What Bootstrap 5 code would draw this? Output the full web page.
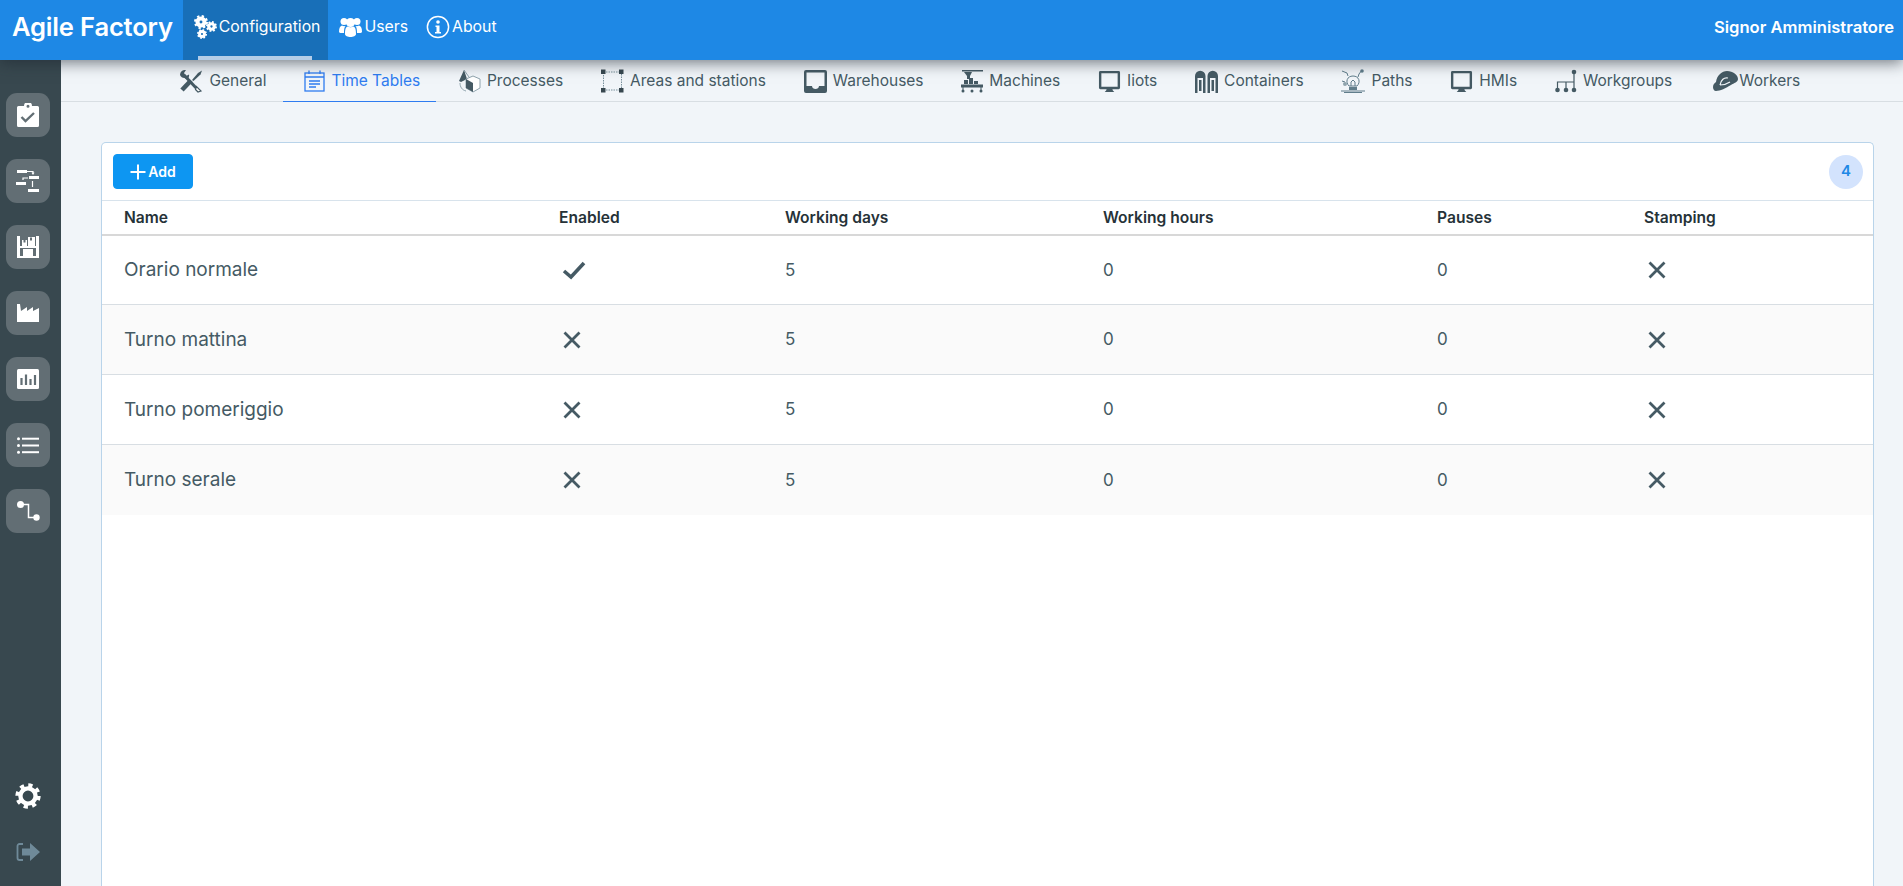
<!DOCTYPE html>
<html lang="en">
<head>
  <meta charset="UTF-8">
  <meta name="viewport" content="width=device-width, initial-scale=1.0">
  <title>Agile Factory</title>
  <link href="https://cdn.jsdelivr.net/npm/bootstrap@5.3.0/dist/css/bootstrap.min.css" rel="stylesheet">
  <style>
    html, body { height: 100%; overflow: hidden; }
    body { font-family: Inter, "Liberation Sans", sans-serif; background: #f1f5f9; color: #455a64; }
    svg { display: block; flex: none; }

    /* top bar */
    .top-bar { height: 60px; background: #1e88e5; color: #fff; position: relative; z-index: 2; box-shadow: 0 3px 14px rgba(30, 40, 50, .6); }
    .top-brand { font-size: 25.6px; font-weight: 600; letter-spacing: -.2px; padding: 0 10px 6px 12px; color: #fff; margin: 0; }
    .top-link { height: 60px; padding: 0 7px 6px 11px; color: #fff; font-size: 15.8px; gap: 2px; position: relative; }
    .top-link:hover { color: #fff; }
    .top-link.is-on { background: #186fb8; padding-right: 8px; }
    .top-link.is-on::after { content: ""; position: absolute; left: 15px; right: 16px; bottom: 0; height: 4px; background: #b3cde8; }
    .top-user { font-size: 16.6px; font-weight: 600; padding: 0 9px 6px 0; }

    /* left rail */
    .side-rail { width: 61px; background: #38484f; padding: 33px 11px 0 6px; }
    .rail-btn { width: 44px; height: 44px; border-radius: 11px; background: #626e74; margin-bottom: 22px; }
    .rail-foot { margin-top: auto; width: 44px; padding-bottom: 24px; }
    .rail-gear { margin-bottom: 33px; }

    /* tabs */
    .tab-bar { height: 42px; border-bottom: 1px solid #d8dee3; padding-right: 6px; }
    .tab-item { height: 42px; padding: 1px 16px 0 21.8px; gap: 6px; font-size: 15.5px; color: #455a64; border-bottom: 1px solid transparent; }
    .tab-item:hover { color: #455a64; }
    .tab-item.is-on { color: #2f7cf0; border-bottom-color: #2f7cf0; }
    .tab-last { padding-left: 24px; padding-right: 0; gap: 0; }

    /* card with table */
    .page-body { padding: 40px 29px 0 40px; min-height: 0; }
    .data-card { border: 1px solid #b9d4ea; border-bottom: 0; border-radius: 5px 5px 0 0; background: #fff; }
    .card-tools { height: 57px; padding: 0 10px 0 11px; }
    .add-btn { width: 80px; height: 35px; background: #0d96f2; border-color: #0d96f2; border-radius: 4px; font-size: 14px; font-weight: 600; padding: 0; gap: 2px; }
    .add-btn:hover { background: #0d96f2; border-color: #0d96f2; }
    .count-dot { width: 34px; height: 34px; background: #d3e3fd; color: #1e88e5; font-size: 15px; font-weight: 600; }
    .time-table { table-layout: fixed; margin: 0; --bs-table-bg: transparent; }
    .time-table th { height: 34px; padding: 1px 22px 0; font-size: 15.6px; font-weight: 600; color: #263238; vertical-align: middle; border-top: 1px solid #d8e3ec; border-bottom: 2px solid #d8d8d8; }
    .time-table td { height: 70px; padding: 1px 22px 0; font-size: 19px; color: #455a64; vertical-align: middle; border-bottom: 1px solid #d8dee3; }
    .time-table td svg { margin-left: 3px; }
    .time-table tbody tr:nth-child(even) td { background: #fafafa; }
    .time-table tbody tr:last-child td { border-bottom: 0; }
    .time-table .cell-num { font-size: 17px; }
    .col-a { width: 435px; }
    .col-b { width: 226px; }
    .col-c { width: 318px; }
    .col-d { width: 334px; }
    .col-e { width: 207px; }
  </style>
</head>
<body class="d-flex flex-column">

  <svg width="0" height="0" class="position-absolute">
    <defs>
      <symbol id="i-gear" viewBox="0 0 24 24">
        <circle cx="12" cy="12" r="7" fill="none" stroke="currentColor" stroke-width="4"/>
        <circle cx="12" cy="12" r="10" fill="none" stroke="currentColor" stroke-width="3.4" stroke-dasharray="3.9 3.95"/>
      </symbol>
      <symbol id="i-gear-solid" viewBox="0 0 24 24">
        <circle cx="12" cy="12" r="6" fill="none" stroke="currentColor" stroke-width="7"/>
        <circle cx="12" cy="12" r="10" fill="none" stroke="currentColor" stroke-width="4" stroke-dasharray="3.9 3.95"/>
      </symbol>
      <symbol id="i-monitor" viewBox="0 0 24 24">
        <path fill="currentColor" fill-rule="evenodd" d="M2.500 1h19A1.500 1.500 0 0 1 23 2.500v16a1.500 1.500 0 0 1-1.500 1.500H15l.5 1.500 1.500 1.500H7l1.500-1.500.5-1.500H2.500A1.500 1.500 0 0 1 1 18.500v-16A1.500 1.500 0 0 1 2.500 1zM3.500 3.500v14h17v-14z"/>
      </symbol>
      <symbol id="i-cross" viewBox="0 0 20 20">
        <path d="M2.500 2.500l15 15M17.500 2.500l-15 15" fill="none" stroke="currentColor" stroke-width="2.800"/>
      </symbol>
    </defs>
  </svg>

  <!-- Barra superiore -->
  <nav class="top-bar d-flex align-items-center flex-none">
    <h1 class="top-brand">Agile Factory</h1>
    <a href="#" class="top-link is-on d-flex align-items-center text-decoration-none">
      <svg width="23" height="24" viewBox="0 0 23 24" color="#fff">
        <use href="#i-gear-solid" x="0" y="0" width="14" height="14"/>
        <use href="#i-gear-solid" x="12" y="6" width="11" height="11"/>
        <use href="#i-gear-solid" x="3" y="14" width="10" height="10"/>
      </svg>
      Configuration
    </a>
    <a href="#" class="top-link d-flex align-items-center text-decoration-none">
      <svg width="23" height="20" viewBox="0 0 23 20">
        <g fill="#fff">
          <circle cx="5" cy="4.500" r="3.500"/><circle cx="18" cy="4.500" r="3.500"/><circle cx="11.500" cy="5.500" r="4.500"/>
          <path d="M0 15c0-4 1-6 3-6.500 1 .8 2.400.8 3.500.6C5.300 10.500 5 13 5 16 2 16 0 16 0 15zM23 15c0-4-1-6-3-6.500-1 .8-2.400.8-3.500.6 1.200 1.400 1.500 3.900 1.500 6.900 3 0 5 0 5-1zM6 17c0-5 1-7 2.500-7.500 1.500 1 4.500 1 6 0C16 10 17 12 17 17c0 4-11 4-11 0z"/>
        </g>
      </svg>
      Users
    </a>
    <a href="#" class="top-link d-flex align-items-center text-decoration-none">
      <svg width="24" height="24" viewBox="0 0 24 24">
        <circle cx="12" cy="12" r="10.600" fill="none" stroke="#fff" stroke-width="1.500"/>
        <circle cx="12" cy="7" r="1.800" fill="#fff"/>
        <path d="M9.500 10.500h4v6.500h1.500v1.500H9v-1.500h1.500v-5h-1z" fill="#fff"/>
      </svg>
      About
    </a>
    <div class="top-user ms-auto">Signor Amministratore</div>
  </nav>

  <div class="d-flex flex-grow-1" style="min-height:0">
    <!-- Colonna laterale -->
    <aside class="side-rail d-flex flex-column flex-none">
      <a href="#" class="rail-btn d-flex align-items-center justify-content-center">
        <svg width="22" height="24" viewBox="0 0 22 24">
          <path fill="#fff" fill-rule="evenodd" d="M1.500 3H7a4 4 0 0 1 8 0h5.500A1.500 1.500 0 0 1 22 4.500v18a1.500 1.500 0 0 1-1.500 1.500h-19A1.500 1.500 0 0 1 0 22.500v-18A1.500 1.500 0 0 1 1.500 3zM11 1.700a1.500 1.500 0 1 0 0 3 1.500 1.500 0 0 0 0-3z"/>
          <path d="M4.500 14l4 4 8.500-8" fill="none" stroke="#626e74" stroke-width="2.400"/>
        </svg>
      </a>
      <a href="#" class="rail-btn d-flex align-items-center justify-content-center">
        <svg width="24" height="22" viewBox="0 0 24 22">
          <g fill="#fff">
            <rect x="1" y="0" width="10" height="3"/><rect x="13" y="6" width="10" height="3"/>
            <rect x="0" y="12" width="10" height="3"/><rect x="12" y="19" width="11" height="3"/>
          </g>
          <path d="M11 1.500h6l0 2M16 2.500l1 1.500 1-1.500M12 8H7v2M16.500 11v6" fill="none" stroke="#fff" stroke-width="1.200"/>
        </svg>
      </a>
      <a href="#" class="rail-btn d-flex align-items-center justify-content-center">
        <svg width="22" height="22" viewBox="0 0 22 22">
          <path fill="#fff" fill-rule="evenodd" d="M0 0h3v10h2V4h5v6h1V1h7v9h1V0h3v22H0zM3 12v8h3v-7h10v7h3v-8z"/>
          <path fill="#fff" d="M7 13.500h3v3h2v-3h3V20H7z"/>
          <path d="M13 1.500v3h2v-3zM6.500 4v2.500h2V4z" fill="#626e74"/>
        </svg>
      </a>
      <a href="#" class="rail-btn d-flex align-items-center justify-content-center">
        <svg width="22" height="18" viewBox="0 0 22 18">
          <path fill="#fff" d="M0 0h3l1 7 6-4v4l6-4v4l6-3v14H0z"/>
        </svg>
      </a>
      <a href="#" class="rail-btn d-flex align-items-center justify-content-center">
        <svg width="22" height="20" viewBox="0 0 22 20">
          <rect width="22" height="20" rx="1.500" fill="#fff"/>
          <path d="M4.500 16V9M9 16V5.500M13.500 16V10M18 16V6" stroke="#626e74" stroke-width="2.200" fill="none"/>
        </svg>
      </a>
      <a href="#" class="rail-btn d-flex align-items-center justify-content-center">
        <svg width="22" height="17" viewBox="0 0 22 17">
          <g fill="#fff">
            <circle cx="1.500" cy="1.800" r="1.500"/><circle cx="1.500" cy="8.500" r="1.500"/><circle cx="1.500" cy="15.200" r="1.500"/>
            <rect x="5" y="0.700" width="17" height="2"/><rect x="5" y="7.500" width="17" height="2"/><rect x="5" y="14.200" width="17" height="2"/>
          </g>
        </svg>
      </a>
      <a href="#" class="rail-btn d-flex align-items-center justify-content-center">
        <svg width="23" height="20" viewBox="0 0 23 20">
          <circle cx="3.500" cy="3.500" r="3.500" fill="#fff"/><circle cx="19.500" cy="16.500" r="3.200" fill="#fff"/>
          <path d="M4 3.500h7.500v13H19" fill="none" stroke="#fff" stroke-width="1.500"/>
        </svg>
      </a>
      <div class="rail-foot d-flex flex-column align-items-center">
        <svg width="26" height="26" viewBox="0 0 24 24" color="#fff" class="rail-gear"><use href="#i-gear"/></svg>
        <svg width="24" height="20" viewBox="0 0 24 20">
          <path d="M7 2H3.500A2 2 0 0 0 1.500 4v12a2 2 0 0 0 2 2H7" fill="none" stroke="#6f8a99" stroke-width="1.800"/>
          <path d="M6 6.500h8V1l10 9-10 9v-5.500H6z" fill="#6f8a99"/>
        </svg>
      </div>
    </aside>

    <main class="flex-grow-1 d-flex flex-column" style="min-width:0">
      <!-- Schede -->
      <div class="tab-bar d-flex justify-content-center">
        <a href="#" class="tab-item d-flex align-items-center text-decoration-none">
          <svg width="24" height="24" viewBox="0 0 24 24">
            <path d="M5 6l14 15" stroke="#455a64" stroke-width="3" fill="none"/>
            <path d="M22 22l-3 1-2.500-2.500 1-3z" fill="#fff" stroke="#455a64" stroke-width="1.200"/>
            <path d="M1 6a5 5 0 0 1 6-5L5 4l2 3 3-1.500A5 5 0 0 1 8 10.500L5.500 9A5 5 0 0 1 1 6z" fill="#455a64"/>
            <path d="M3 21l9-9.500" stroke="#455a64" stroke-width="4.600" fill="none"/>
            <path d="M13 11l6-7 4-2.500-1.500 4-7 6.500z" fill="#455a64"/>
          </svg>
          General
        </a>
        <a href="#" class="tab-item is-on d-flex align-items-center text-decoration-none">
          <svg width="21" height="22" viewBox="0 0 21 22">
            <g fill="none" stroke="#2f7cf0" stroke-width="1.300">
              <rect x="1" y="3" width="19" height="18"/>
              <path d="M1 7h19M5 0.500V4M16 0.500V4M5 11h11M5 14h11M5 17h7"/>
            </g>
          </svg>
          Time Tables
        </a>
        <a href="#" class="tab-item d-flex align-items-center text-decoration-none">
          <svg width="23" height="24" viewBox="0 0 23 24">
            <path d="M6 1L1 12l2 1 6-3z" fill="#455a64"/>
            <path d="M6 1l5 7M2 14c0 4 2 7 6 8" fill="none" stroke="#90a4ae"/>
            <path d="M8 10l7-3 7 3v9l-7 4-7-4z" fill="#fff" stroke="#90a4ae"/>
            <path d="M8 10l7 4v9l-7-4z" fill="#455a64"/>
          </svg>
          Processes
        </a>
        <a href="#" class="tab-item d-flex align-items-center text-decoration-none">
          <svg width="23" height="24" viewBox="0 0 23 24">
            <rect x="2.500" y="3" width="18" height="18" fill="none" stroke="#78909c" stroke-dasharray="1.500 1"/>
            <g fill="#37474f">
              <rect x="0" y="0.500" width="4.500" height="4.500"/><rect x="18" y="0.500" width="4.500" height="4.500"/>
              <rect x="0" y="19" width="4.500" height="4.500"/><rect x="18" y="19" width="4.500" height="4.500"/>
            </g>
          </svg>
          Areas and stations
        </a>
        <a href="#" class="tab-item d-flex align-items-center text-decoration-none">
          <svg width="23" height="23" viewBox="0 0 23 23">
            <path fill="#455a64" fill-rule="evenodd" d="M2 0h19a2 2 0 0 1 2 2v19a2 2 0 0 1-2 2H2a2 2 0 0 1-2-2V2a2 2 0 0 1 2-2zM2.500 2.500V16H8c0 4 7 4 7 0h5.500V2.500z"/>
          </svg>
          Warehouses
        </a>
        <a href="#" class="tab-item d-flex align-items-center text-decoration-none">
          <svg width="22" height="24" viewBox="0 0 22 24">
            <g fill="#455a64">
              <rect x="1" y="1" width="21" height="1.500"/>
              <path d="M3 3h8L9 7v3H6V7z"/>
              <rect x="3" y="11" width="4" height="4"/><rect x="8" y="9" width="4" height="6"/><rect x="13" y="12" width="4" height="3"/>
              <rect x="0" y="15.500" width="22" height="3"/>
              <circle cx="2" cy="22" r="1.500"/><circle cx="11" cy="22" r="1.500"/><circle cx="20" cy="22" r="1.500"/>
              <rect x="1.500" y="18" width="1" height="4"/><rect x="19.500" y="18" width="1" height="4"/>
            </g>
          </svg>
          Machines
        </a>
        <a href="#" class="tab-item d-flex align-items-center text-decoration-none">
          <svg width="23" height="23" viewBox="0 0 24 24" color="#455a64"><use href="#i-monitor"/></svg>
          Iiots
        </a>
        <a href="#" class="tab-item d-flex align-items-center text-decoration-none">
          <svg width="23" height="23" viewBox="0 0 23 23">
            <path fill="#455a64" fill-rule="evenodd" d="M0 6a5 5 0 0 1 10.500 0v17H8V8H2.500v15H0zM12.500 6A5 5 0 0 1 23 6v17h-2.500V8H15v15h-2.500z"/>
            <path fill="#455a64" d="M4 10h2.500v11H4zM16.500 10H19v11h-2.500z"/>
          </svg>
          Containers
        </a>
        <a href="#" class="tab-item d-flex align-items-center text-decoration-none">
          <svg width="24" height="24" viewBox="0 0 24 24">
            <g fill="none" stroke="#607d8b">
              <path d="M8 17c-4-4-2-10 4-10s8 6 4 10z"/>
              <path d="M10 17v-4l2-2 2 2v4M0 22h24M3 23.500h18" />
              <path d="M1 2l5 2 1 3M21 1l-3 4-1 3M1 12l3 1"/>
            </g>
            <circle cx="4" cy="15" r="2" fill="#90a4ae"/><circle cx="21" cy="2" r="1.800" fill="#607d8b"/>
            <rect x="8" y="18" width="8" height="3" fill="#607d8b"/>
          </svg>
          Paths
        </a>
        <a href="#" class="tab-item d-flex align-items-center text-decoration-none">
          <svg width="23" height="23" viewBox="0 0 24 24" color="#455a64"><use href="#i-monitor"/></svg>
          HMIs
        </a>
        <a href="#" class="tab-item d-flex align-items-center text-decoration-none">
          <svg width="22" height="24" viewBox="0 0 22 24">
            <g fill="#455a64">
              <circle cx="19" cy="3" r="2.300"/><circle cx="2.500" cy="21" r="2.300"/><circle cx="11" cy="21" r="2.300"/><circle cx="19" cy="21" r="2.300"/>
            </g>
            <path d="M19 3v18M2.500 21v-8H19M11 21v-8" fill="none" stroke="#455a64" stroke-width="1.200"/>
          </svg>
          Workgroups
        </a>
        <a href="#" class="tab-item tab-last d-flex align-items-center text-decoration-none">
          <svg width="27" height="24" viewBox="0 0 27 24">
            <path fill="#455a64" d="M1 18c0-3 2-4 3-5C5 6 10 2 15 2c6 0 11 4 11 8 0 3-4 4-7 6-5 3-11 6-15 6-2 0-3-2-3-4z"/>
            <path d="M8 16c1-5 4-8 8-7M8 16c3 0 7-1 10-3" fill="none" stroke="#f1f5f9" stroke-width="1.200"/>
          </svg>
          Workers
        </a>
      </div>

      <!-- Tabella orari -->
      <div class="page-body flex-grow-1 d-flex flex-column">
        <div class="data-card flex-grow-1">
          <div class="card-tools d-flex align-items-center justify-content-between">
            <button type="button" class="btn btn-primary add-btn d-flex align-items-center justify-content-center">
              <svg width="16" height="16" viewBox="0 0 16 16"><path d="M8 0.500v15M0.500 8h15" stroke="#fff" stroke-width="2" fill="none"/></svg>
              Add
            </button>
            <span class="count-dot rounded-circle d-flex align-items-center justify-content-center">4</span>
          </div>
          <table class="table time-table">
            <colgroup>
              <col class="col-a"><col class="col-b"><col class="col-c"><col class="col-d"><col class="col-e"><col>
            </colgroup>
            <thead>
              <tr><th>Name</th><th>Enabled</th><th>Working days</th><th>Working hours</th><th>Pauses</th><th>Stamping</th></tr>
            </thead>
            <tbody>
              <tr>
                <td>Orario normale</td>
                <td><svg width="24" height="19" viewBox="0 0 24 19"><path d="M2 10l7 6L22 2" fill="none" stroke="#455a64" stroke-width="3.600"/></svg></td>
                <td class="cell-num">5</td><td class="cell-num">0</td><td class="cell-num">0</td>
                <td><svg width="20" height="20" color="#455a64"><use href="#i-cross"/></svg></td>
              </tr>
              <tr>
                <td>Turno mattina</td>
                <td><svg width="20" height="20" color="#455a64"><use href="#i-cross"/></svg></td>
                <td class="cell-num">5</td><td class="cell-num">0</td><td class="cell-num">0</td>
                <td><svg width="20" height="20" color="#455a64"><use href="#i-cross"/></svg></td>
              </tr>
              <tr>
                <td>Turno pomeriggio</td>
                <td><svg width="20" height="20" color="#455a64"><use href="#i-cross"/></svg></td>
                <td class="cell-num">5</td><td class="cell-num">0</td><td class="cell-num">0</td>
                <td><svg width="20" height="20" color="#455a64"><use href="#i-cross"/></svg></td>
              </tr>
              <tr>
                <td>Turno serale</td>
                <td><svg width="20" height="20" color="#455a64"><use href="#i-cross"/></svg></td>
                <td class="cell-num">5</td><td class="cell-num">0</td><td class="cell-num">0</td>
                <td><svg width="20" height="20" color="#455a64"><use href="#i-cross"/></svg></td>
              </tr>
            </tbody>
          </table>
        </div>
      </div>
    </main>
  </div>

  <script src="https://cdn.jsdelivr.net/npm/bootstrap@5.3.0/dist/js/bootstrap.bundle.min.js"></script>
</body>
</html>
